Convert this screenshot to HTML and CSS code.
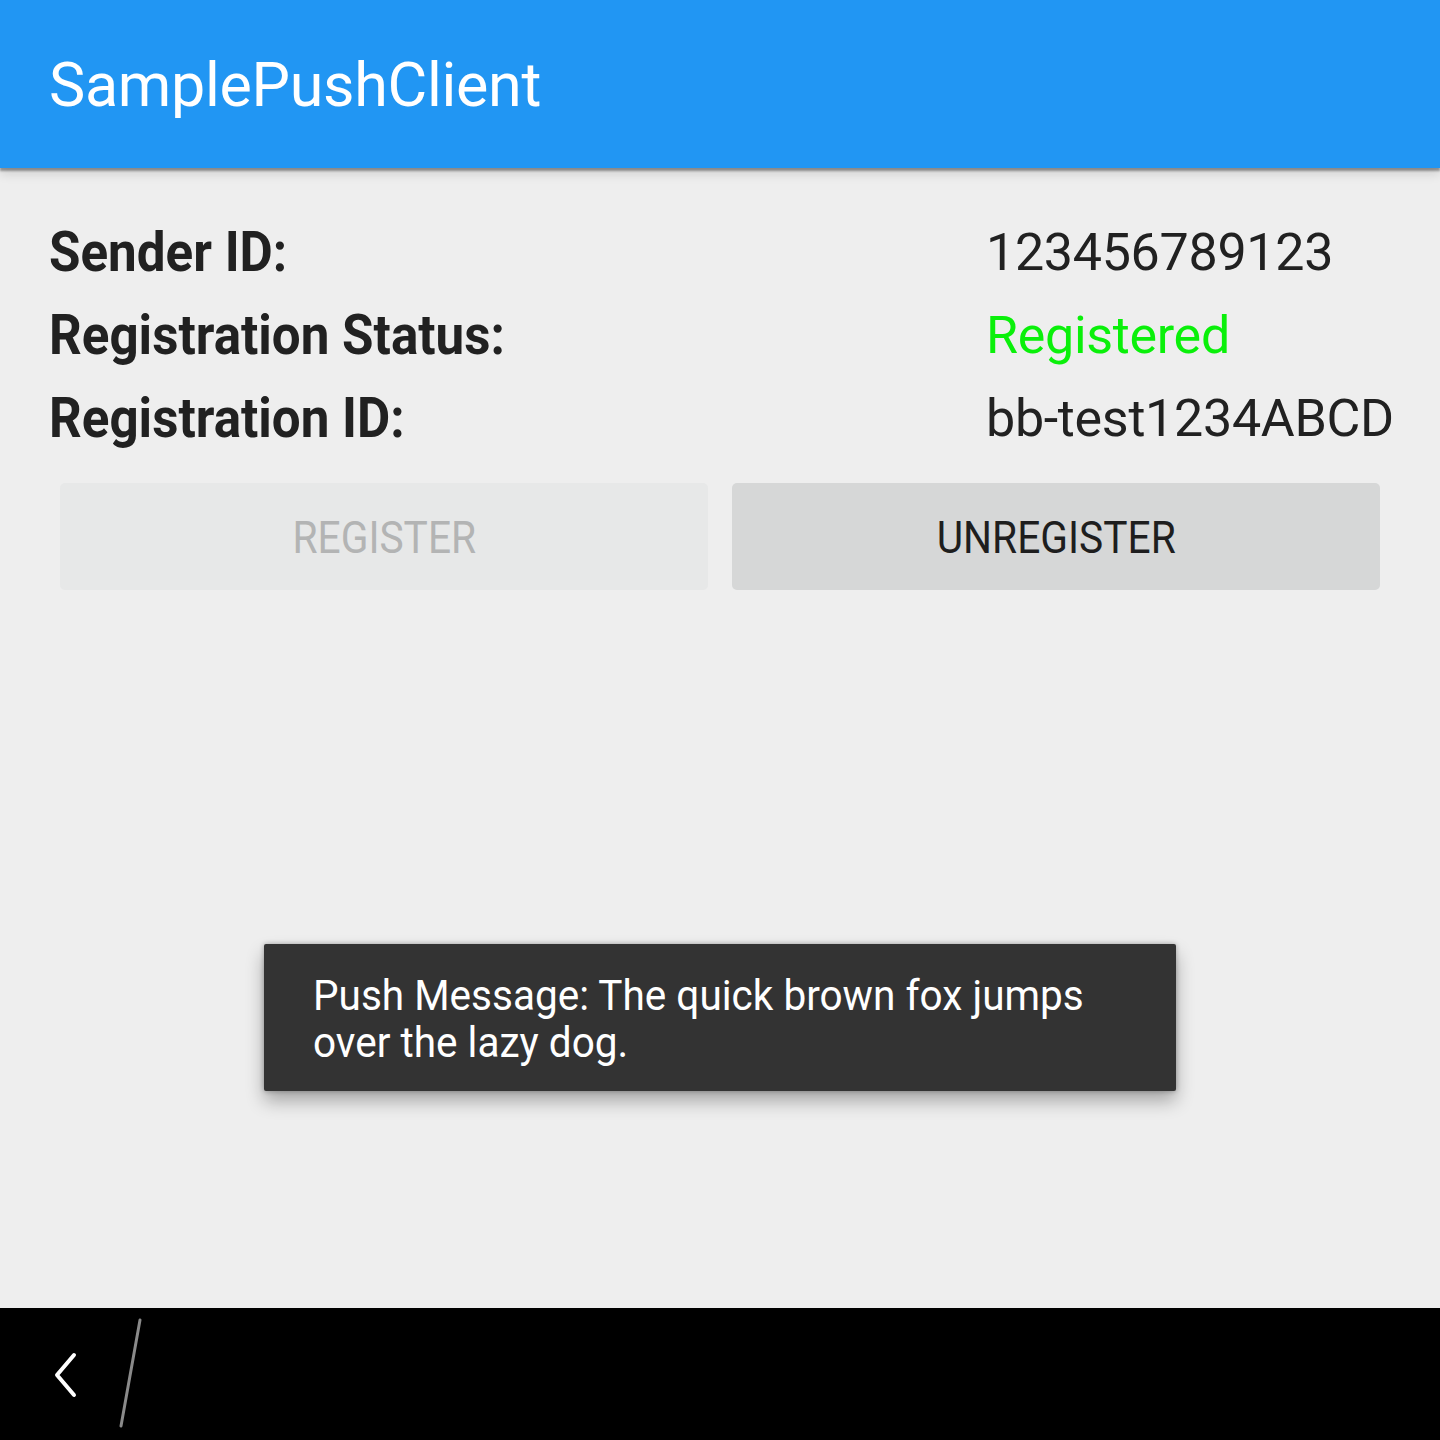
FILE: index.html
```html
<!DOCTYPE html>
<html>
<head>
<meta charset="utf-8">
<title>SamplePushClient</title>
<link rel="stylesheet" href="styles.css">
</head>
<body>
<div class="screen">
  <header class="appbar">
    <h1 class="title">SamplePushClient</h1>
  </header>
  <main class="content">
    <div class="info">
      <div class="label"><span class="cond">Sender ID:</span></div>
      <div class="value">123456789123</div>
      <div class="label"><span class="cond">Registration Status:</span></div>
      <div class="value green">Registered</div>
      <div class="label"><span class="cond">Registration ID:</span></div>
      <div class="value">bb-test1234ABCD</div>
    </div>
    <div class="buttons">
      <div class="btn disabled"><span class="cond-c">REGISTER</span></div>
      <div class="btn"><span class="cond-c">UNREGISTER</span></div>
    </div>
    <div class="toast">
      <p class="toast-text"><span class="cond-t">Push Message: The quick brown fox jumps</span><br><span class="cond-t">over the lazy dog.</span></p>
    </div>
  </main>
  <nav class="navbar">
    <svg class="back" width="40" height="60" viewBox="0 0 40 60">
      <polyline points="29,13 12,33 29,53" fill="none" stroke="#ffffff" stroke-width="4" stroke-linecap="round" stroke-linejoin="round"/>
    </svg>
    <svg class="slash" width="40" height="120" viewBox="0 0 40 120">
      <line x1="28" y1="12" x2="9" y2="118" stroke="#8a8a8a" stroke-width="3" stroke-linecap="round"/>
    </svg>
  </nav>
</div>
</body>
</html>
```
FILE: styles.css
```css
html, body {
  margin: 0;
  padding: 0;
}
body {
  width: 1440px;
  height: 1440px;
  overflow: hidden;
  font-family: Roboto, "Noto Sans", sans-serif;
  background: #eeeeee;
}
.screen {
  display: flex;
  flex-direction: column;
  height: 1440px;
}
.appbar {
  height: 168px;
  flex: 0 0 168px;
  background: #2196f3;
  display: flex;
  align-items: center;
  padding-left: 49px;
  box-shadow: 0 3px 2px rgba(0,0,0,0.35), 0 6px 10px rgba(0,0,0,0.12);
  position: relative;
  z-index: 2;
}
.title {
  margin: 0;
  font-weight: 400;
  font-size: 61px;
  color: #ffffff;
  letter-spacing: -0.3px;
  line-height: 1;
  padding-top: 2px;
}
.content {
  flex: 1;
  position: relative;
  padding-top: 43px;
}
.info {
  display: grid;
  grid-template-columns: 937px 1fr;
  padding-left: 49px;
  line-height: 83px;
  color: #212121;
}
.label {
  font-weight: 700;
  font-size: 55px;
  white-space: nowrap;
}
.cond {
  display: inline-block;
  transform: scaleX(0.93);
  transform-origin: left center;
}
.value {
  font-size: 52px;
  white-space: nowrap;
  letter-spacing: -0.3px;
}
.green {
  color: #0af00a;
}
.buttons {
  display: flex;
  gap: 24px;
  padding: 0 60px;
  margin-top: 23px;
}
.btn {
  flex: 1;
  height: 107px;
  border-radius: 5px;
  background: #d6d7d7;
  color: #1e1e1e;
  display: flex;
  align-items: center;
  justify-content: center;
  font-size: 44px;
}
.btn.disabled {
  background: #e7e8e8;
  color: #b3b4b4;
}
.cond-c {
  display: inline-block;
  transform: scaleX(0.925);
  padding-top: 2px;
}
.toast {
  position: absolute;
  left: 264px;
  top: 776px;
  width: 912px;
  height: 147px;
  background: #333333;
  border-radius: 2px;
  box-shadow: 0 10px 18px rgba(0,0,0,0.3), 0 0 5px rgba(0,0,0,0.3);
  box-sizing: border-box;
  padding: 28px 0 0 49px;
}
.toast-text {
  margin: 0;
  color: #ffffff;
  font-size: 42px;
  line-height: 47px;
}
.cond-t {
  display: inline-block;
  transform: scaleX(0.965);
  transform-origin: left center;
  white-space: nowrap;
}
.navbar {
  flex: 0 0 132px;
  height: 132px;
  background: #000000;
  display: flex;
  align-items: flex-start;
}
.back {
  margin-top: 34px;
  margin-left: 45px;
}
.slash {
  margin-left: 27px;
}
```
